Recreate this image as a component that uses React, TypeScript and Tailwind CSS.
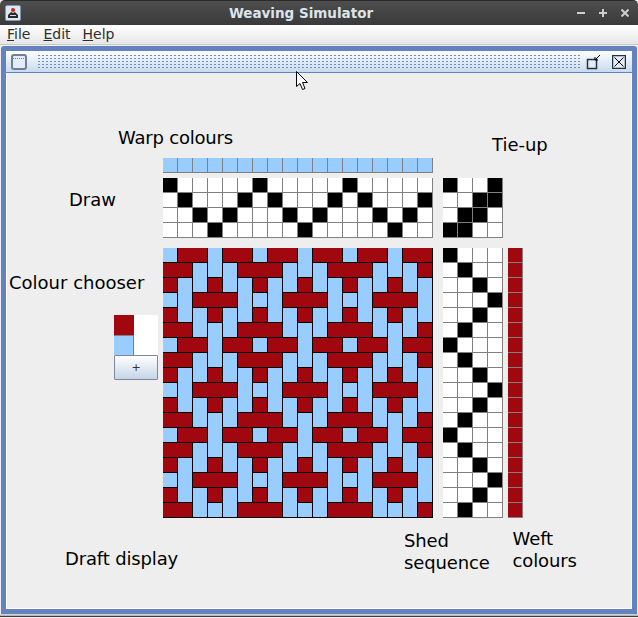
const BLUE = "bg-[#99ccff]";
const RED = "bg-[#a0070f]";

const threading = [0, 1, 2, 3, 2, 1];
const tieUp = [
  [1, 0, 0, 1],
  [0, 0, 1, 1],
  [0, 1, 1, 0],
  [1, 1, 0, 0],
];
const cols = Array.from({ length: 18 }, (_, i) => threading[i % 6]);
const rows = cols;

// warp on top for a given row / column
const up = (r: number, c: number) => tieUp[cols[c]][rows[r]] === 1;

function GridBox({ children, cls }: { children: React.ReactNode; cls: string }) {
  return <div className={`grid auto-rows-[15px] ${cls}`}>{children}</div>;
}

function Cell({ on }: { on: boolean }) {
  return <div className={`box-border border-r border-b border-[#808080] ${on ? "bg-black" : "bg-white"}`} />;
}

function ColourCell({ cls }: { cls: string }) {
  return <div className={`box-border border-r border-b border-[#808080] ${cls}`} />;
}

function Drawdown() {
  const cells = [];
  for (let r = 0; r < 18; r++) {
    for (let c = 0; c < 18; c++) {
      const u = up(r, c);
      let line = "";
      if (u) {
        const below = r < 17 && up(r + 1, c);
        line = below ? "border-r" : "border-r border-b";
      } else {
        const right = c < 17 && !up(r, c + 1);
        line = right ? "border-b" : "border-r border-b";
      }
      cells.push(<div key={`${r}-${c}`} className={`box-border border-black ${line} ${u ? BLUE : RED}`} />);
    }
  }
  return <GridBox cls="grid-cols-[repeat(18,15px)]">{cells}</GridBox>;
}

function Cursor() {
  return (
    <svg className="absolute left-[296px] top-[71px]" width="13" height="20" viewBox="0 0 13 20">
      <path d="M0.5 0.5V15.5L4 12.5L6.5 18.5L9 17.5L6.5 11.5H11.5Z" fill="#fff" stroke="#000" strokeWidth="1" />
    </svg>
  );
}

export default function App() {
  return (
    <div className="relative w-[638px] h-[618px] overflow-hidden bg-[#eeeeee] font-['DejaVu_Sans',sans-serif] text-black">
      {/* title bar */}
      <div className="relative flex items-center h-[25px] rounded-t-[5px] bg-gradient-to-b from-[#4e4e4e] to-[#3a3a3a] border-t border-[#2a2a2a]">
        <div className="ml-[5px] w-[16px] h-[16px] rounded-[2px] bg-[#dfe8f0] border border-[#7d9ab5] flex items-center justify-center">
          <svg width="14" height="14" viewBox="0 0 14 14">
            <path d="M2 9l3-3 2 1 2-1 3 3v3H2z" fill="#2a2a2a" />
            <path d="M4 9h6v1H4z" fill="#ddd" />
            <circle cx="7" cy="4" r="2" fill="#d02020" />
          </svg>
        </div>
        <div className="absolute left-0 w-[602px] text-center text-[13.5px] font-bold text-[#dce4ec]">Weaving Simulator</div>
        <div className="ml-auto flex items-center gap-[14px] mr-[9px]">
          <div className="w-[8px] h-[2px] bg-[#cfcfcf]" />
          <div className="relative w-[8px] h-[8px]">
            <div className="absolute left-0 top-[3px] w-[8px] h-[2px] bg-[#cfcfcf]" />
            <div className="absolute left-[3px] top-0 w-[2px] h-[8px] bg-[#cfcfcf]" />
          </div>
          <svg width="8" height="8" viewBox="0 0 8 8">
            <path d="M0.5 0.5l7 7M7.5 0.5l-7 7" stroke="#cfcfcf" strokeWidth="2" />
          </svg>
        </div>
      </div>

      {/* menu bar */}
      <div className="flex items-center h-[20px] pl-[7px] gap-[13px] text-[14px] text-[#2e2e2e] bg-gradient-to-b from-[#ffffff] to-[#e6e6e6] border-b border-[#c8c8c8]">
        <span><u>F</u>ile</span>
        <span><u>E</u>dit</span>
        <span className="-ml-[1px]"><u>H</u>elp</span>
      </div>

      {/* internal frame */}
      <div className="mt-[1px] mx-[1px] h-[568px] flex flex-col border-[5px] border-[#6382bf] rounded-t-[3px] bg-[#eeeeee]">
        <div className="flex items-center h-[22px] pl-[5px] pr-[6px] bg-gradient-to-b from-[#ffffff] to-[#c8daed] border-b border-[#6382bf]">
          <svg width="16" height="16" viewBox="0 0 16 16">
            <rect x="1" y="1" width="14" height="14" rx="2" fill="#e4ecf5" stroke="#6e7f96" strokeWidth="2" />
            <path d="M2 4.5h12" stroke="#6e7f96" strokeWidth="1" strokeDasharray="1 1" />
          </svg>
          <div className="ml-[10px] flex-1 h-[15px] bg-[radial-gradient(#6f8dc8_0.6px,transparent_0.8px)] bg-[length:4px_3px]" />
          <svg className="ml-[5px]" width="16" height="16" viewBox="0 0 16 16">
            <rect x="1.5" y="5.5" width="9" height="9" fill="#e4ecf5" stroke="#22304a" strokeWidth="1.5" />
            <path d="M14 1L9 6M9 3v3h3" fill="none" stroke="#000" strokeWidth="1" />
          </svg>
          <svg className="ml-[10px]" width="14" height="14" viewBox="0 0 14 14">
            <rect x="0.5" y="0.5" width="13" height="13" fill="#e4ecf5" stroke="#22304a" strokeWidth="1.5" />
            <path d="M2.5 2.5l9 9M11.5 2.5l-9 9" stroke="#000" strokeWidth="1" />
          </svg>
        </div>

        <div className="flex-1 flex flex-col border-l border-r border-b border-white">
          <div className="flex h-[85px] text-[18px] leading-[22px]">
            <span className="ml-[111px] mt-[54px] h-[22px] tracking-[-0.2px]">Warp colours</span>
            <span className="ml-[259px] mt-[61px] h-[22px]">Tie-up</span>
          </div>
          <div className="ml-[156px]">
            <GridBox cls="grid-cols-[repeat(18,15px)]">
              {cols.map((_, i) => <ColourCell key={i} cls={BLUE} />)}
            </GridBox>
          </div>
          <div className="flex mt-[5px]">
            <div className="w-[156px] pl-[62px] pt-[11px] text-[18px] leading-[22px]">Draw</div>
            <GridBox cls="grid-cols-[repeat(18,15px)]">
              {[0, 1, 2, 3].flatMap((r) => cols.map((s, c) => <Cell key={`${r}-${c}`} on={s === r} />))}
            </GridBox>
            <GridBox cls="ml-[10px] grid-cols-[repeat(4,15px)]">
              {tieUp.flatMap((row, r) => row.map((v, c) => <Cell key={`${r}-${c}`} on={v === 1} />))}
            </GridBox>
          </div>
          <div className="flex mt-[10px]">
            <div className="w-[156px] flex flex-col items-start">
              <span className="ml-[2px] mt-[24px] text-[18px] leading-[22px]">Colour chooser</span>
              <div className="ml-[107px] mt-[21px] w-[44px]">
                <div className="flex h-[40px]">
                  <div className="w-[20px]">
                    <div className={`h-[20px] ${RED}`} />
                    <div className={`box-border h-[20px] border-t border-r border-[#808080] ${BLUE}`} />
                  </div>
                  <div className="flex-1 bg-white" />
                </div>
                <button className="box-border block w-[44px] h-[25px] border border-[#7a8a9c] rounded-[1px] bg-gradient-to-b from-[#ffffff] to-[#c5d5e6] text-[11px] leading-[22px] text-[#333]">+</button>
              </div>
            </div>
            <Drawdown />
            <GridBox cls="ml-[10px] grid-cols-[repeat(4,15px)] h-fit">
              {rows.flatMap((s, r) => [0, 1, 2, 3].map((c) => <Cell key={`${r}-${c}`} on={s === c} />))}
            </GridBox>
            <GridBox cls="ml-[5px] grid-cols-[15px] h-fit">
              {rows.map((_, i) => <ColourCell key={i} cls={RED} />)}
            </GridBox>
          </div>
          <div className="flex text-[18px] leading-[22px] tracking-[-0.15px]">
            <span className="ml-[58px] mt-[30px] h-[22px]">Draft display</span>
            <span className="ml-[226px] mt-[12px]">Shed<br />sequence</span>
            <span className="ml-[23px] mt-[10px]">Weft<br />colours</span>
          </div>
        </div>
      </div>
      <div className="h-[3px] bg-gradient-to-b from-[#e0e0e0] to-[#a8a8a8] border-b border-[#3a3a3a]" />
      <Cursor />
    </div>
  );
}
